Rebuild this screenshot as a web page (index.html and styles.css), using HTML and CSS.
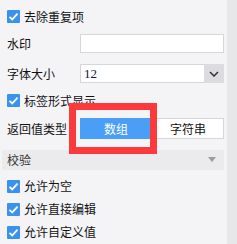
FILE: index.html
```html
<!DOCTYPE html>
<html>
<head>
<meta charset="utf-8">
<link rel="stylesheet" href="styles.css">
</head>
<body>
<div class="page">
  <div class="main">
    <div class="check-row first">
      <span class="cb"><svg viewBox="0 0 13 13" width="13" height="13"><path d="M2.5 6.8 L5.2 9.4 L10.6 3.6" fill="none" stroke="#fff" stroke-width="1.8"/></svg></span>
      <span class="cb-label">去除重复项</span>
    </div>
    <div class="field-row r-input">
      <span class="label">水印</span>
      <div class="input"></div>
    </div>
    <div class="field-row r-select">
      <span class="label">字体大小</span>
      <div class="select">
        <span class="select-val">12</span>
        <span class="select-btn"><svg viewBox="0 0 10 6" width="10" height="6"><path d="M1 1 L5 5 L9 1" fill="none" stroke="#333" stroke-width="1.5"/></svg></span>
      </div>
    </div>
    <div class="check-row r-tag">
      <span class="cb"><svg viewBox="0 0 13 13" width="13" height="13"><path d="M2.5 6.8 L5.2 9.4 L10.6 3.6" fill="none" stroke="#fff" stroke-width="1.8"/></svg></span>
      <span class="cb-label">标签形式显示</span>
    </div>
    <div class="field-row r-seg">
      <span class="label">返回值类型</span>
      <div class="seg">
        <span class="seg-item active">数组</span>
        <span class="seg-item">字符串</span>
      </div>
      <div class="highlight"></div>
    </div>
    <div class="section">
      <span>校验</span>
      <span class="tri"></span>
    </div>
    <div class="check-row r-c1">
      <span class="cb"><svg viewBox="0 0 13 13" width="13" height="13"><path d="M2.5 6.8 L5.2 9.4 L10.6 3.6" fill="none" stroke="#fff" stroke-width="1.8"/></svg></span>
      <span class="cb-label">允许为空</span>
    </div>
    <div class="check-row">
      <span class="cb"><svg viewBox="0 0 13 13" width="13" height="13"><path d="M2.5 6.8 L5.2 9.4 L10.6 3.6" fill="none" stroke="#fff" stroke-width="1.8"/></svg></span>
      <span class="cb-label">允许直接编辑</span>
    </div>
    <div class="check-row">
      <span class="cb"><svg viewBox="0 0 13 13" width="13" height="13"><path d="M2.5 6.8 L5.2 9.4 L10.6 3.6" fill="none" stroke="#fff" stroke-width="1.8"/></svg></span>
      <span class="cb-label">允许自定义值</span>
    </div>
  </div>
  <div class="scrollbar"></div>
</div>
</body>
</html>
```

FILE: styles.css
```css
html, body {
  margin: 0;
  padding: 0;
}
body {
  width: 237px;
  height: 244px;
  overflow: hidden;
  background: #f4f4f7;
  font-family: "Noto Sans CJK SC", "Noto Sans", sans-serif;
  font-size: 12px;
  color: #111;
}
.page {
  display: flex;
  height: 244px;
}
.main {
  width: 227px;
  display: flex;
  flex-direction: column;
  padding-top: 4px;
}
.scrollbar {
  width: 10px;
  background: #e7e7e9;
}
.check-row {
  display: flex;
  align-items: center;
  height: 26px;
  padding-left: 7px;
}
.cb {
  width: 13px;
  height: 13px;
  background: #3a92ef;
  border-radius: 1px;
  display: flex;
}
.cb-label {
  margin-left: 4px;
  line-height: 14px;
}
.field-row {
  position: relative;
  display: flex;
  align-items: center;
  padding-left: 7px;
}
.label {
  width: 73px;
  line-height: 14px;
}
.r-input {
  margin-top: 5px;
  height: 19px;
}
.input {
  width: 142px;
  height: 17px;
  border: 1px solid #d6d6da;
  background: #fff;
}
.r-select {
  margin-top: 11px;
  height: 19px;
}
.select {
  width: 142px;
  height: 17px;
  border: 1px solid #d6d6da;
  background: #fff;
  display: flex;
  align-items: center;
}
.select-val {
  flex: 1;
  padding-left: 3px;
  font-family: "Liberation Serif", serif;
  font-size: 13px;
  color: #14143a;
}
.select-btn {
  width: 20px;
  height: 19px;
  margin-right: -1px;
  background: #dcdce0;
  display: flex;
  align-items: center;
  justify-content: center;
}
.r-tag {
  margin-top: 5px;
}
.r-seg {
  margin-top: 5px;
  height: 21px;
}
.seg {
  display: flex;
  width: 144px;
  height: 21px;
}
.seg-item {
  flex: 1;
  display: flex;
  align-items: center;
  justify-content: center;
  background: #fff;
  border: 1px solid #d6d6da;
  box-sizing: border-box;
}
.seg-item.active {
  background: #4b9ef6;
  border-color: #4b9ef6;
  color: #fff;
}
.highlight {
  position: absolute;
  left: 69px;
  top: -15px;
  width: 74px;
  height: 37px;
  border: 7px solid #fc3a3c;
}
.section {
  margin-top: 11px;
  margin-left: 2px;
  height: 20px;
  padding: 0 8px 0 5px;
  background: #ebebee;
  display: flex;
  align-items: center;
  justify-content: space-between;
  color: #333;
  width: 209px;
}
.tri {
  width: 0;
  height: 0;
  border-left: 4px solid transparent;
  border-right: 4px solid transparent;
  border-top: 5px solid #9c9ca0;
}
.r-c1 {
  margin-top: 5px;
}
.main > .check-row:not(.first):not(.r-tag) {
  height: 24px;
}
```
